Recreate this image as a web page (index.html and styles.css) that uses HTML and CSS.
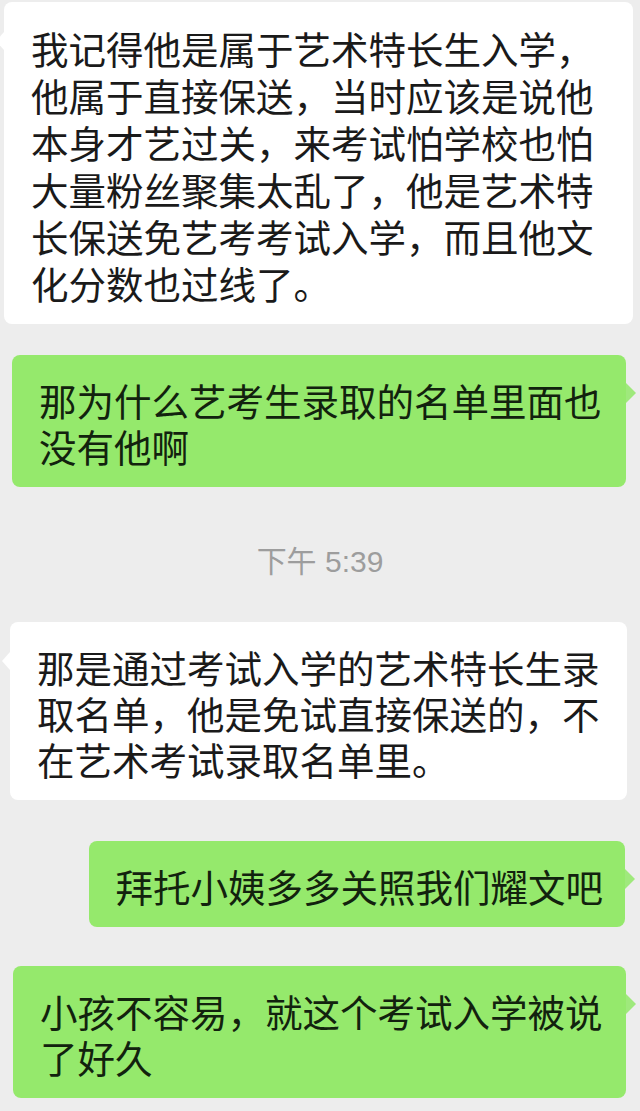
FILE: index.html
```html
<!DOCTYPE html>
<html lang="zh-CN">
<head>
<meta charset="utf-8">
<title>聊天记录</title>
<link rel="stylesheet" href="styles.css">
</head>
<body>
<main class="chat">
  <div class="bubble bubble-in b1">我记得他是属于艺术特长生入学，他属于直接保送，当时应该是说他本身才艺过关，来考试怕学校也怕大量粉丝聚集太乱了，他是艺术特长保送免艺考考试入学，而且他文化分数也过线了。</div>
  <div class="bubble bubble-out b2">那为什么艺考生录取的名单里面也没有他啊</div>
  <div class="time">下午 5:39</div>
  <div class="bubble bubble-in b3">那是通过考试入学的艺术特长生录取名单，他是免试直接保送的，不在艺术考试录取名单里。</div>
  <div class="bubble bubble-out b4">拜托小姨多多关照我们耀文吧</div>
  <div class="bubble bubble-out b5">小孩不容易，就这个考试入学被说了好久</div>
</main>
</body>
</html>
```

FILE: styles.css
```css
html, body {
  margin: 0;
  padding: 0;
  background: #ededed;
}

body {
  width: 640px;
  height: 1111px;
  overflow: hidden;
  font-family: "Noto Sans CJK SC", "Noto Sans", sans-serif;
}

.chat {
  display: flex;
  flex-direction: column;
  padding-top: 2px;
}

.bubble {
  position: relative;
  box-sizing: border-box;
  border-radius: 8px;
  padding: 22px 22px 18px 27px;
  font-size: 37.5px;
  line-height: 46px;
  color: #1a1a1a;
}

.bubble-in {
  background: #ffffff;
}

.bubble-out {
  background: #95e96c;
  color: #12220e;
}

.bubble-out::after {
  content: "";
  position: absolute;
  right: -10px;
  top: 28px;
  border-style: solid;
  border-width: 10px 0 10px 10px;
  border-color: transparent transparent transparent #9fe97c;
}

.bubble-in::before {
  content: "";
  position: absolute;
  left: -8px;
  top: 30px;
  border-style: solid;
  border-width: 9px 8px 9px 0;
  border-color: transparent #ffffff transparent transparent;
}

.b1 {
  margin-left: 4px;
  width: 629px;
  line-height: 47px;
}

.b2 {
  margin-top: 31px;
  margin-left: 12px;
  width: 614px;
}

.time {
  margin-top: 55px;
  height: 40px;
  line-height: 40px;
  text-align: center;
  font-family: "Liberation Sans", "Noto Sans CJK SC", sans-serif;
  font-size: 30px;
  color: #9d9d9d;
}

.b3 {
  margin-top: 40px;
  margin-left: 10px;
  width: 617px;
}

.b4 {
  margin-top: 41px;
  align-self: flex-end;
  margin-right: 15px;
}

.b5 {
  margin-top: 39px;
  margin-left: 13px;
  width: 613px;
}
```
